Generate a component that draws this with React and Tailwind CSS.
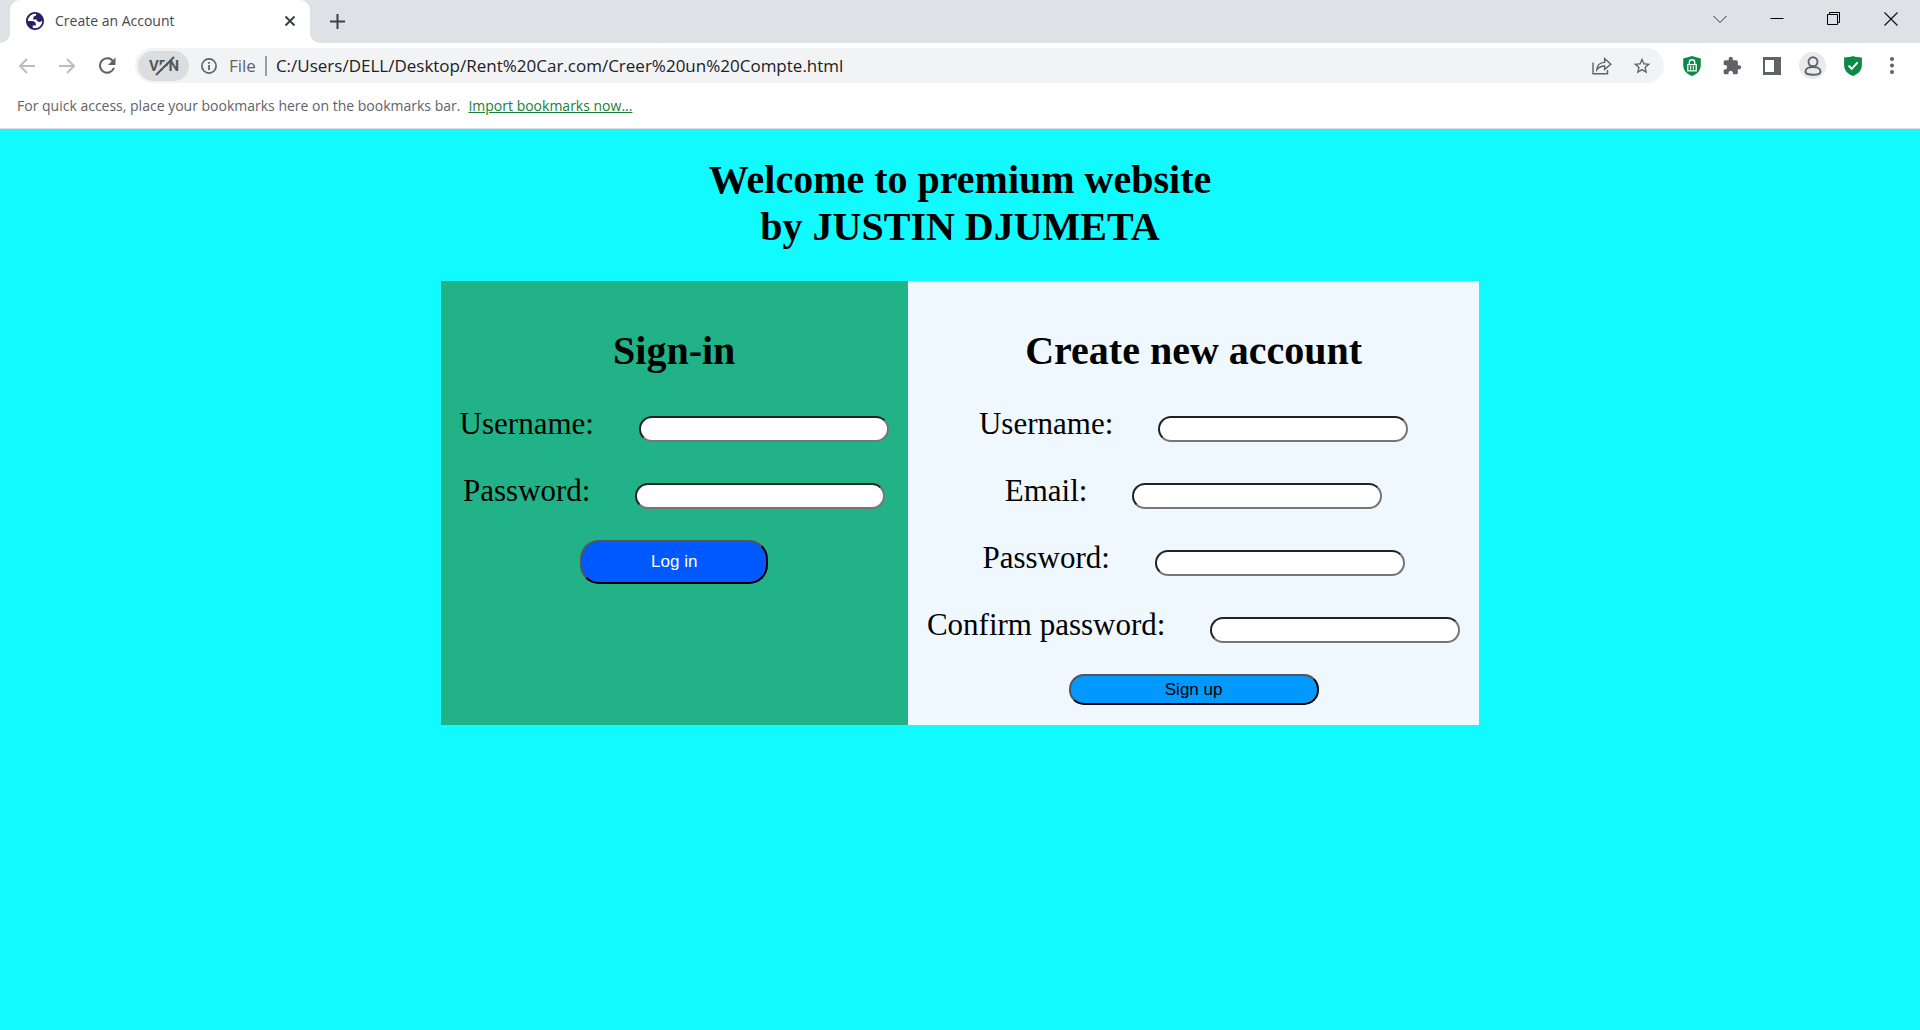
import React from "react";

const inputClass =
  "h-[26px] w-[250px] rounded-[13px] border-2 border-t-[#222222] border-l-[#222222] border-r-[#767676] border-b-[#767676] bg-white px-2 text-base outline-none";

function Field({ id, label, type = "text" }) {
  return (
    <div className="flex h-9 items-end justify-center gap-[45px]">
      <label htmlFor={id} className="text-[31px] leading-9 whitespace-nowrap">
        {label}
      </label>
      <input id={id} name={id} type={type} className={inputClass} />
    </div>
  );
}

function TabStrip() {
  return (
    <div className="flex h-[43px] items-end bg-[#dee1e6]">
      <div className="h-[43px] w-[10px] bg-white">
        <div className="h-full rounded-br-[10px] bg-[#dee1e6]" />
      </div>
      <div className="flex h-[43px] w-[300px] items-center rounded-t-[10px] bg-white pr-[11px] pb-0.5 pl-4">
        <svg width="18" height="18" viewBox="2 2 20 20" fill="#2a1f66" aria-hidden="true">
          <path
            fillRule="evenodd"
            d="M12 2C6.48 2 2 6.48 2 12s4.48 10 10 10 10-4.48 10-10S17.52 2 12 2zM4 12h4.400c3.407.022 4.922 1.730 4.543 5.127H9.488v2.470a8.004 8.004 0 0 0 10.498-8.083C19.327 12.504 18.332 13 17 13c-2.137 0-3.206-.916-3.206-2.750h-3.748c-.274-2.728.683-4.092 2.870-4.092 0-.975.327-1.597.811-1.970A8.004 8.004 0 0 0 4 12z"
          />
        </svg>
        <span className="ml-[11px] flex-1 text-sm leading-5 text-[#45494d]">Create an Account</span>
        <button type="button" aria-label="Close tab" className="flex size-[18px] items-center justify-center">
          <svg width="10" height="10" viewBox="0 0 10 10" stroke="#3c4043" strokeWidth="2" aria-hidden="true">
            <path d="M0.5 0.5 L9.5 9.5 M9.5 0.5 L0.5 9.5" />
          </svg>
        </button>
      </div>
      <div className="h-[43px] w-[10px] bg-white">
        <div className="h-full rounded-bl-[10px] bg-[#dee1e6]" />
      </div>
      <button type="button" aria-label="New tab" className="mb-3 ml-[8px] flex size-[19px] items-center justify-center">
        <svg width="15" height="15" viewBox="0 0 15 15" stroke="#3c4043" strokeWidth="2" aria-hidden="true">
          <path d="M7.5 0 V15 M0 7.5 H15" />
        </svg>
      </button>
      <div className="mb-3 ml-auto flex h-[24px] items-center gap-[43px] pr-[22px] text-black">
        <button type="button" aria-label="Search tabs">
          <svg width="14" height="14" viewBox="0 0 14 14" fill="none" stroke="#333" aria-hidden="true">
            <path d="M0.5 4 L7 10.5 L13.5 4" />
          </svg>
        </button>
        <button type="button" aria-label="Minimize">
          <svg width="14" height="14" viewBox="0 0 14 14" stroke="#000" aria-hidden="true">
            <path d="M0.5 6.5 H13.5" />
          </svg>
        </button>
        <button type="button" aria-label="Restore">
          <svg width="14" height="14" viewBox="0 0 14 14" fill="none" stroke="#000" aria-hidden="true">
            <path d="M0.5 2.5 H10.5 V12.5 H0.5 Z M2.5 2.5 V0.5 H12.5 V10.5 H10.5" />
          </svg>
        </button>
        <button type="button" aria-label="Close">
          <svg width="14" height="14" viewBox="0 0 14 14" stroke="#111" strokeWidth="1.2" aria-hidden="true">
            <path d="M0.5 0.5 L13.5 13.5 M13.5 0.5 L0.5 13.5" />
          </svg>
        </button>
      </div>
    </div>
  );
}

function Toolbar() {
  return (
    <div className="flex h-[45px] items-center bg-white pr-6 pl-[17px]">
      <button type="button" aria-label="Back" className="flex size-5 items-center justify-center">
        <svg width="18" height="16" viewBox="0 0 18 16" fill="none" stroke="#babcbe" strokeWidth="2" aria-hidden="true">
          <path d="M17 8 H2 M9 1 L2 8 L9 15" />
        </svg>
      </button>
      <button type="button" aria-label="Forward" className="ml-5 flex size-5 items-center justify-center">
        <svg width="18" height="16" viewBox="0 0 18 16" fill="none" stroke="#babcbe" strokeWidth="2" aria-hidden="true">
          <path d="M1 8 H16 M9 1 L16 8 L9 15" />
        </svg>
      </button>
      <button type="button" aria-label="Reload" className="ml-5 flex size-5 items-center justify-center">
        <svg width="18" height="18" viewBox="0 0 18 18" aria-hidden="true">
          <path d="M15.2 4.6 A7.2 7.2 0 1 0 16 10.8" fill="none" stroke="#5f6368" strokeWidth="2" />
          <path d="M17.500 0.500 V8 H10 Z" fill="#5f6368" />
        </svg>
      </button>

      <div className="ml-[18px] flex h-[35px] flex-1 items-center rounded-full bg-[#f1f3f4] pr-3 pl-[3px]">
        <span className="flex h-[30px] w-[51px] items-center justify-center rounded-full bg-[#dcdde1]">
          <svg width="32" height="20" viewBox="0 0 32 20" role="img" aria-label="VPN off">
            <text x="1" y="15" fontFamily="Roboto, sans-serif" fontSize="15" fontWeight="700" fill="#54575b">
              VPN
            </text>
            <path d="M6.500 17 L24 0" stroke="#dcdde1" strokeWidth="3" />
            <path d="M8 19 L26 1" stroke="#54575b" strokeWidth="2.200" />
          </svg>
        </span>
        <svg className="ml-3" width="16" height="16" viewBox="0 0 16 16" aria-hidden="true">
          <circle cx="8" cy="8" r="7.1" fill="none" stroke="#5f6368" strokeWidth="1.7" />
          <path d="M8 7 V12 M8 4 V5.7" stroke="#5f6368" strokeWidth="1.8" />
        </svg>
        <span className="ml-3 text-[17px] leading-5 text-[#5f6368]">File</span>
        <span className="mx-[9px] h-5 w-0.5 bg-[#9a9da1]" />
        <input
          aria-label="Address"
          className="h-6 min-w-0 flex-1 bg-transparent text-[17px] leading-5 text-[#202124] outline-none"
          defaultValue="C:/Users/DELL/Desktop/Rent%20Car.com/Creer%20un%20Compte.html"
        />
        <button type="button" aria-label="Share this page">
          <svg width="20" height="18" viewBox="0 0 20 18" fill="none" stroke="#5f6368" strokeWidth="1.4" aria-hidden="true">
            <path d="M1 5.5 V16.8 H15.5 V13" />
            <path d="M4.8 12.8 C5 8.2 8 5.6 12.6 5.4 V1.6 L18.8 7.2 L12.6 12.4 V9 C9 9 6.8 10 4.8 12.8 Z" />
          </svg>
        </button>
        <button type="button" aria-label="Bookmark this tab" className="ml-[20px]">
          <svg width="20" height="20" viewBox="0 0 24 24" fill="#5f6368" aria-hidden="true">
            <path d="M22 9.24l-7.19-.62L12 2 9.19 8.63 2 9.24l5.46 4.73L5.82 21 12 17.27 18.18 21l-1.63-7.03L22 9.24zM12 15.4l-3.76 2.27 1-4.28-3.32-2.88 4.38-.38L12 6.1l1.71 4.04 4.38.38-3.32 2.88 1 4.28L12 15.4z" />
          </svg>
        </button>
      </div>

      <button type="button" aria-label="VPN extension" className="ml-[19px]">
        <svg width="18" height="20" viewBox="0 0 18 20" aria-hidden="true">
          <path d="M9 0 L17.8 2.4 V9 C17.8 14.4 14 18.4 9 20 C4 18.4 0.2 14.4 0.2 9 V2.4 Z" fill="#0b8a45" />
          <path d="M6.3 8.6 V6.4 A2.7 2.7 0 0 1 11.7 6.4 V8.6" fill="none" stroke="#fff" strokeWidth="1.4" />
          <rect x="4.8" y="8.6" width="8.4" height="6.2" fill="none" stroke="#fff" strokeWidth="1.3" />
          <path d="M7.6 10 V13.4 M10.4 10 V13.4" stroke="#fff" strokeWidth="1.2" />
        </svg>
      </button>
      <button type="button" aria-label="Extensions" className="ml-[21px]">
        <svg width="20" height="20" viewBox="0 0 24 24" fill="#5f6368" aria-hidden="true">
          <path d="M20.5 11H19V7c0-1.1-.9-2-2-2h-4V3.5C13 2.12 11.88 1 10.5 1S8 2.12 8 3.5V5H4c-1.1 0-1.99.9-1.99 2v3.8H3.500c1.490 0 2.700 1.210 2.700 2.700s-1.210 2.700-2.700 2.700H2V20c0 1.100.9 2 2 2h3.800v-1.500c0-1.490 1.210-2.700 2.700-2.700 1.490 0 2.700 1.210 2.700 2.700V22H17c1.100 0 2-.9 2-2v-4h1.500c1.380 0 2.500-1.120 2.500-2.500S21.880 11 20.500 11z" />
        </svg>
      </button>
      <button type="button" aria-label="Side panel" className="ml-[21px]">
        <svg width="18" height="18" viewBox="0 0 18 18" aria-hidden="true">
          <rect width="18" height="18" fill="#5f6368" />
          <rect x="2" y="3" width="9" height="12" fill="#fff" />
        </svg>
      </button>
      <button type="button" aria-label="Profile" className="ml-[18px] flex size-[27px] items-center justify-center rounded-full bg-[#e8eaed]">
        <svg width="18" height="20" viewBox="0 0 18 20" fill="none" stroke="#5f6368" strokeWidth="1.9" aria-hidden="true">
          <circle cx="9" cy="5.8" r="4.5" />
          <path d="M9 11 C13 11 16.500 12.600 16.500 15.400 C16.500 17.800 13.500 18.800 9 18.800 C4.500 18.800 1.500 17.800 1.500 15.400 C1.500 12.600 5 11 9 11 Z" />
        </svg>
      </button>
      <button type="button" aria-label="Protection" className="ml-[18px]">
        <svg width="18" height="20" viewBox="0 0 18 20" aria-hidden="true">
          <path d="M9 0 C11.500 1 14.500 1.400 17.900 1.400 V9 C17.900 14.400 14 18.400 9 20 C4 18.400 0.100 14.400 0.100 9 V1.400 C3.500 1.400 6.500 1 9 0 Z" fill="#0b8a45" />
          <path d="M4.600 9.600 L7.800 12.800 L13.600 6.400" fill="none" stroke="#fff" strokeWidth="2" />
        </svg>
      </button>
      <button type="button" aria-label="Menu" className="ml-[26px] flex w-2 justify-center">
        <svg width="4" height="17" viewBox="0 0 4 17" fill="#5f6368" aria-hidden="true">
          <circle cx="2" cy="2" r="2" />
          <circle cx="2" cy="8.500" r="2" />
          <circle cx="2" cy="15" r="2" />
        </svg>
      </button>
    </div>
  );
}

export default function App() {
  return (
    <div className="flex min-h-screen flex-col bg-[#10faff]">
      <header className="font-['Open_Sans',sans-serif]">
        <TabStrip />
        <Toolbar />
        <div className="flex h-[41px] items-center gap-2 border-b border-[#dadce0] bg-white pb-[5px] pl-[17px] text-sm leading-5 text-[#5f6368]">
          <span>For quick access, place your bookmarks here on the bookmarks bar.</span>
          <a href="#import" className="text-[#188038] underline">
            Import bookmarks now...
          </a>
        </div>
      </header>

      <main className="flex flex-col items-center pt-[27px] font-['Liberation_Serif',serif] text-black">
        <h1 className="text-center text-[40px] leading-[47px] font-bold">
          Welcome to premium website
          <br />
          by JUSTIN DJUMETA
        </h1>
        <div className="mt-[31px] flex">
          <form className="flex flex-col items-center bg-[#22b287] px-[19px] pt-[46px] pb-5">
            <h2 className="mb-8 text-[40px] leading-[47px] font-bold">Sign-in</h2>
            <div className="flex flex-col items-center gap-[31px]">
              <Field id="login-username" label="Username:" />
              <Field id="login-password" label="Password:" type="password" />
              <button
                type="button"
                className="h-11 w-[188px] rounded-[19px] border-2 border-t-[#555555] border-l-[#555555] border-r-black border-b-black bg-[#0059ff] font-['Liberation_Sans',sans-serif] text-[17px] leading-5 text-white"
              >
                Log in
              </button>
            </div>
          </form>
          <form className="flex flex-col items-center bg-[#f0f8ff] px-[19px] pt-[46px] pb-5">
            <h2 className="mb-8 text-[40px] leading-[47px] font-bold">Create new account</h2>
            <div className="flex flex-col items-center gap-[31px]">
              <Field id="new-username" label="Username:" />
              <Field id="new-email" label="Email:" type="email" />
              <Field id="new-password" label="Password:" type="password" />
              <Field id="new-confirm" label="Confirm password:" type="password" />
              <button
                type="button"
                className="h-[31px] w-[250px] rounded-[15px] border-2 border-t-[#555555] border-l-[#555555] border-r-black border-b-black bg-[#0099ff] font-['Liberation_Sans',sans-serif] text-[17px] leading-5 text-black"
              >
                Sign up
              </button>
            </div>
          </form>
        </div>
      </main>
    </div>
  );
}
